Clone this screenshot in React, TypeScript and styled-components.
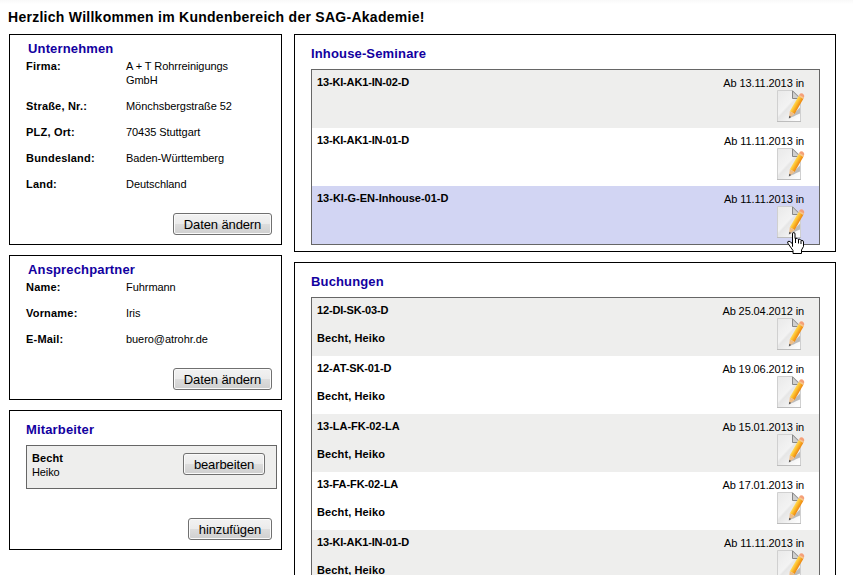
import React from 'react';
import styled, { createGlobalStyle } from 'styled-components';

const GlobalStyle = createGlobalStyle`
  * { box-sizing: border-box; }
  body {
    margin: 0;
    height: 575px;
    overflow: hidden;
    background: linear-gradient(#f9f9f9, #fff 4px) no-repeat #fff;
    font: 11px/14px Arial, "Liberation Sans", sans-serif;
    color: #000;
  }
`;

const Page = styled.main`
  width: 853px;
  height: 575px;
  overflow: hidden;
  padding: 8px 17px 0 9px;
`;

const Title = styled.h1`
  margin: 0 0 8px -1px;
  font-size: 14px;
  line-height: 18px;
  letter-spacing: 0.27px;
  white-space: nowrap;
`;

const Columns = styled.div`
  display: grid;
  grid-template-columns: 273px 542px;
  column-gap: 12px;
  align-items: start;
`;

const Column = styled.div`
  display: flex;
  flex-direction: column;
  gap: 10px;
`;

const Panel = styled.section<{ $height: number }>`
  height: ${(p) => p.$height}px;
  border: 1px solid #000;
  background: #fff;
  display: flex;
  flex-direction: column;
`;

const DataPanel = styled(Panel)`
  padding: 6px 9px 9px 16px;
`;

const StaffPanel = styled(Panel)`
  padding: 11px 4px 9px 16px;
`;

const ListPanel = styled(Panel)`
  padding: 11px 15px 6px 16px;
`;

const PanelTitle = styled.h2<{ $indent?: number; $gap: number }>`
  margin: 0 0 ${(p) => p.$gap}px ${(p) => p.$indent ?? 0}px;
  font-size: 13px;
  line-height: 16px;
  letter-spacing: 0.15px;
  color: #1200a0;
`;

const Field = styled.div`
  display: grid;
  grid-template-columns: 100px 120px;
  margin-bottom: 12px;
`;

const Label = styled.span`
  font-weight: bold;
  letter-spacing: 0.2px;
`;

const Value = styled.span`
  letter-spacing: -0.06px;
`;

const Actions = styled.div<{ $inset?: number }>`
  display: flex;
  justify-content: flex-end;
  margin-top: auto;
  padding-right: ${(p) => p.$inset ?? 0}px;
`;

const Button = styled.button<{ $width: number }>`
  width: ${(p) => p.$width}px;
  height: 22px;
  flex: none;
  padding: 1px 0 0;
  border: 1px solid #707070;
  border-radius: 3px;
  background: linear-gradient(#f2f2f2 0%, #ebebeb 50%, #dddddd 50%, #cfcfcf 100%);
  box-shadow: inset 0 0 0 1px #fafafa;
  font: 13px/18px Arial, "Liberation Sans", sans-serif;
  letter-spacing: -0.12px;
  color: #000;
  white-space: nowrap;
`;

const StaffCard = styled.div`
  height: 44px;
  border: 1px solid #666;
  background: #eeeeed;
  display: flex;
  justify-content: space-between;
  align-items: flex-start;
  padding: 5px 11px 0 5px;

  ${Button} {
    margin-top: 2px;
  }
`;

const StaffName = styled.div`
  display: flex;
  flex-direction: column;
  letter-spacing: -0.1px;
`;

const Strong = styled.strong`
  letter-spacing: 0.1px;
`;

const List = styled.div`
  border: 1px solid #666;
`;

const Row = styled.div<{ $tone: 'grey' | 'white' | 'active' }>`
  height: 58px;
  display: flex;
  justify-content: space-between;
  padding: 5px 15px 0 5px;
  background: ${(p) => ({ grey: '#eeeeed', white: '#fff', active: '#d2d5f3' })[p.$tone]};
`;

const RowText = styled.div`
  display: flex;
  flex-direction: column;
  gap: 14px;
  font-weight: bold;
`;

const Code = styled.span<{ $tracking: number }>`
  letter-spacing: ${(p) => p.$tracking}px;
`;

const Person = styled.span`
  letter-spacing: 0.12px;
`;

const RowMeta = styled.div`
  position: relative;
  display: flex;
  flex-direction: column;
  align-items: flex-end;
  padding-top: 1px;
  letter-spacing: -0.1px;
`;

const EditSvg = styled.svg`
  display: block;
  width: 32px;
  height: 32px;
  flex: none;
  margin-right: -2px;
`;

const Pointer = styled.svg`
  position: absolute;
  right: 0;
  top: 41px;
  width: 17px;
  height: 22px;
  z-index: 1;
`;

const EditIcon = () => (
  <EditSvg viewBox="0 0 32 32">
    <defs>
      <linearGradient id="paper" x1="0" y1="0" x2="0.8" y2="1">
        <stop offset="0" stopColor="#e9e9e9" />
        <stop offset="0.5" stopColor="#f3f3f3" />
        <stop offset="0.56" stopColor="#e6e6e6" />
        <stop offset="1" stopColor="#fcfcfc" />
      </linearGradient>
      <linearGradient id="wood" gradientUnits="userSpaceOnUse" x1="19" y1="13" x2="24.5" y2="16.2">
        <stop offset="0" stopColor="#ffe58a" />
        <stop offset="0.45" stopColor="#ffc935" />
        <stop offset="1" stopColor="#ef8d13" />
      </linearGradient>
    </defs>
    <path d="M3.5 0.5H18.5L26.5 8V31.5H3.5Z" fill="url(#paper)" stroke="#d0d0d0" />
    <path d="M3 31.5H27" stroke="#bdbdbd" />
    <path d="M16 27.5L26 17.5V23.5Q22 25 19.5 26.5Z" fill="#a2a2a2" opacity="0.7" />
    <path d="M18.5 0.8V8.5H26.2Z" fill="#cfcfcf" stroke="#878787" />
    <path d="M24.6 6L29.4 8.8L20.6 24L15.8 21.2Z" fill="url(#wood)" />
    <path d="M24.6 6L25.8 4Q26.8 2.7 28.6 3.6Q30.7 4.8 30.2 6.8L29.4 8.8Z" fill="#f5a079" />
    <path d="M24.6 6L25.3 4.9L30 7.6L29.4 8.8Z" fill="#f6c98c" />
    <path d="M15.8 21.2L20.6 24L15 28.2Z" fill="#efbd86" />
    <path d="M15.3 25.8L17.4 26.9L14.8 28.6Z" fill="#555" />
  </EditSvg>
);

const HandPointer = () => (
  <Pointer viewBox="0 0 17 22">
    <path
      d="M5.5 14.5V2Q5.5 .5 6.75 .5Q8 .5 8 2V6.5Q10.5 5.7 11 7.3Q13.5 6.6 14 8.3Q16.5 8 16.5 10V14.5L14.5 18V21.5H6V18.5L2.8 14L.7 11Q.3 9.3 2 9.2Q3.5 9.3 5.5 12Z"
      fill="#fff"
      stroke="#000"
    />
    <path d="M8.5 6.5V11M11.5 7.5V11.5M14 8.5V12" stroke="#000" fill="none" />
  </Pointer>
);

interface DataProps {
  title: string;
  height: number;
  fields: [string, string][];
}

const DataBox = ({ title, height, fields }: DataProps) => (
  <DataPanel $height={height}>
    <PanelTitle $indent={2} $gap={2}>{title}</PanelTitle>
    {fields.map(([label, value]) => (
      <Field key={label}>
        <Label>{label}</Label>
        <Value>{value}</Value>
      </Field>
    ))}
    <Actions>
      <Button $width={99}>Daten ändern</Button>
    </Actions>
  </DataPanel>
);

interface Entry {
  code: string;
  date: string;
  tracking: number;
  person?: string;
  active?: boolean;
}

const seminars: Entry[] = [
  { code: '13-KI-AK1-IN-02-D', date: '13.11.2013', tracking: -0.16 },
  { code: '13-KI-AK1-IN-01-D', date: '11.11.2013', tracking: -0.16 },
  { code: '13-KI-G-EN-Inhouse-01-D', date: '11.11.2013', tracking: 0, active: true },
];

const bookings: Entry[] = [
  { code: '12-DI-SK-03-D', date: '25.04.2012', tracking: -0.16, person: 'Becht, Heiko' },
  { code: '12-AT-SK-01-D', date: '19.06.2012', tracking: -0.1, person: 'Becht, Heiko' },
  { code: '13-LA-FK-02-LA', date: '15.01.2013', tracking: -0.03, person: 'Becht, Heiko' },
  { code: '13-FA-FK-02-LA', date: '17.01.2013', tracking: -0.1, person: 'Becht, Heiko' },
  { code: '13-KI-AK1-IN-01-D', date: '11.11.2013', tracking: -0.16, person: 'Becht, Heiko' },
];

const EntryBox = ({ title, height, entries }: { title: string; height: number; entries: Entry[] }) => (
  <ListPanel $height={height}>
    <PanelTitle $gap={7}>{title}</PanelTitle>
    <List>
      {entries.map((e, i) => (
        <Row key={e.code} $tone={e.active ? 'active' : i % 2 ? 'white' : 'grey'}>
          <RowText>
            <Code $tracking={e.tracking}>{e.code}</Code>
            {e.person && <Person>{e.person}</Person>}
          </RowText>
          <RowMeta>
            <span>Ab {e.date} in</span>
            <EditIcon />
            {e.active && <HandPointer />}
          </RowMeta>
        </Row>
      ))}
    </List>
  </ListPanel>
);

export default function App() {
  return (
    <>
      <GlobalStyle />
      <Page>
        <Title>Herzlich Willkommen im Kundenbereich der SAG-Akademie!</Title>
        <Columns>
          <Column>
            <DataBox
              title="Unternehmen"
              height={211}
              fields={[
                ['Firma:', 'A + T Rohrreinigungs GmbH'],
                ['Straße, Nr.:', 'Mönchsbergstraße 52'],
                ['PLZ, Ort:', '70435 Stuttgart'],
                ['Bundesland:', 'Baden-Württemberg'],
                ['Land:', 'Deutschland'],
              ]}
            />
            <DataBox
              title="Ansprechpartner"
              height={145}
              fields={[
                ['Name:', 'Fuhrmann'],
                ['Vorname:', 'Iris'],
                ['E-Mail:', 'buero@atrohr.de'],
              ]}
            />
            <StaffPanel $height={140}>
              <PanelTitle $gap={7}>Mitarbeiter</PanelTitle>
              <StaffCard>
                <StaffName>
                  <Strong>Becht</Strong>
                  <span>Heiko</span>
                </StaffName>
                <Button $width={82}>bearbeiten</Button>
              </StaffCard>
              <Actions $inset={5}>
                <Button $width={84}>hinzufügen</Button>
              </Actions>
            </StaffPanel>
          </Column>
          <Column>
            <EntryBox title="Inhouse-Seminare" height={218} entries={seminars} />
            <EntryBox title="Buchungen" height={340} entries={bookings} />
          </Column>
        </Columns>
      </Page>
    </>
  );
}
